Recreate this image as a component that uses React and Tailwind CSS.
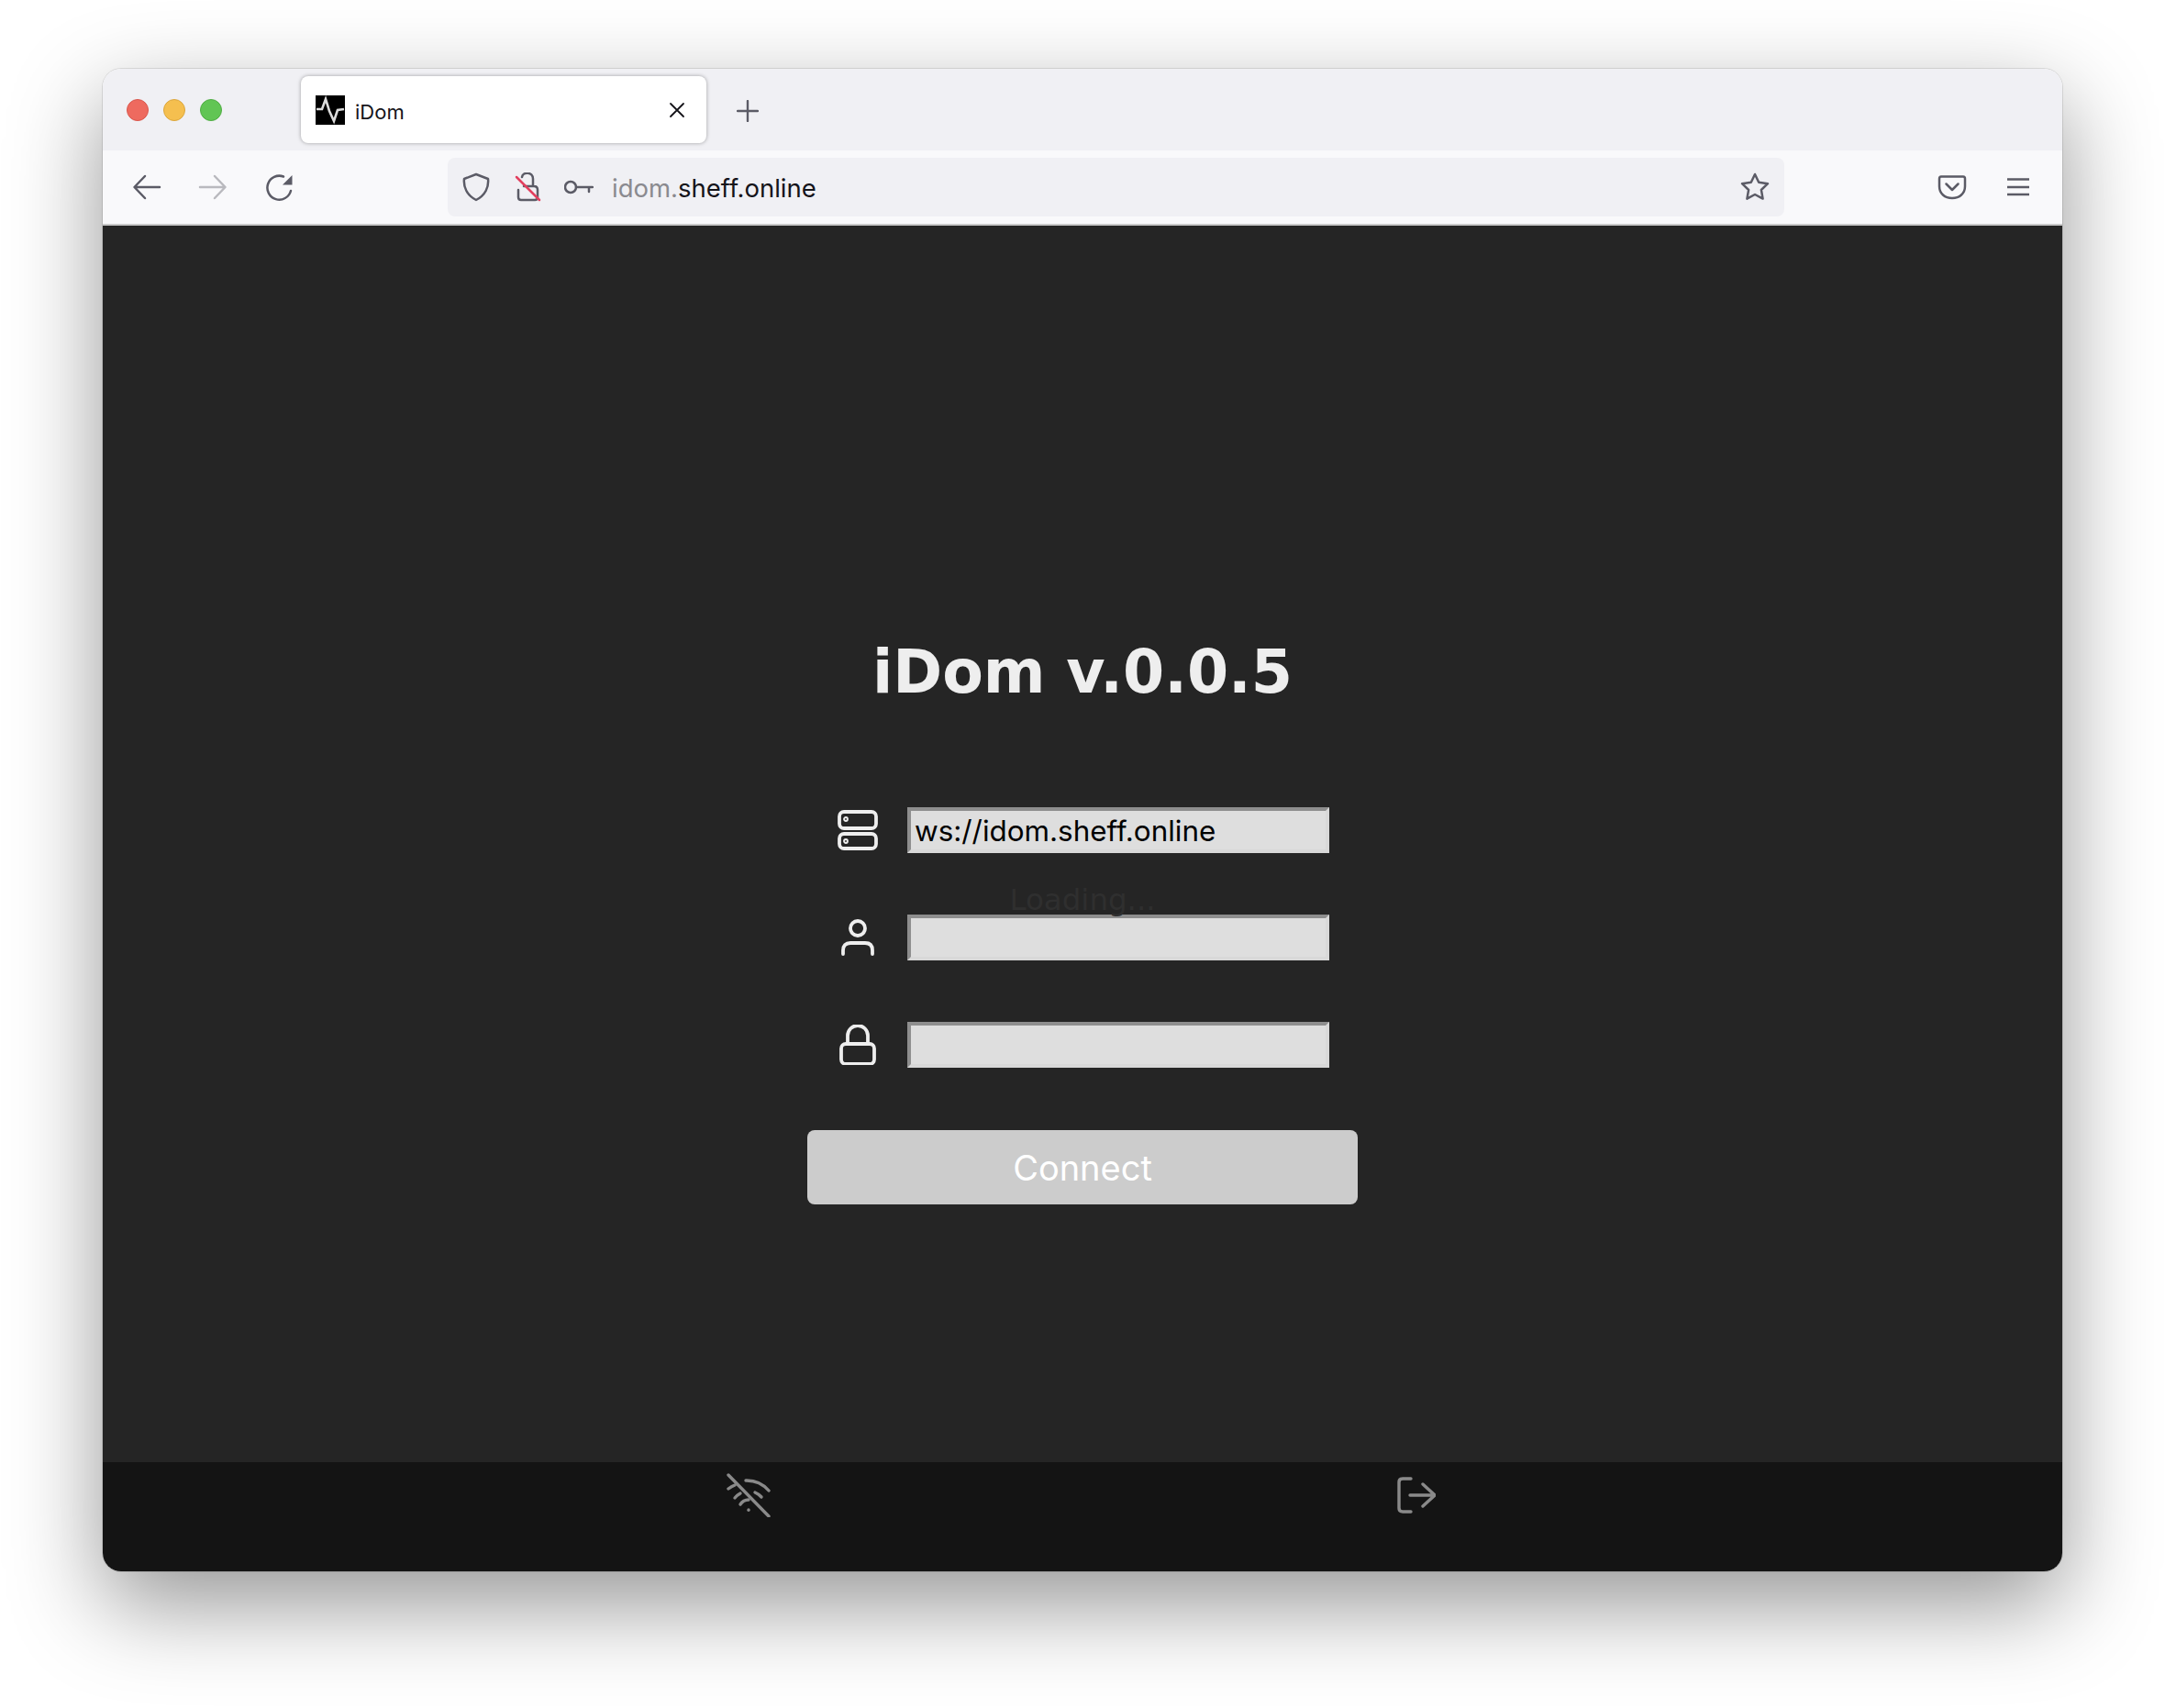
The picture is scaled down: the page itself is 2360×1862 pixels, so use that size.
import React from "react";

const G = "#5b5b66";

function Ico({ w = 32, h = 32, sw = 2.5, c = G, children, className = "" }) {
  return (
    <svg width={w} height={h} viewBox={`0 0 ${w} ${h}`} fill="none" stroke={c} strokeWidth={sw} strokeLinecap="round" strokeLinejoin="round" className={`shrink-0 ${className}`}>
      {children}
    </svg>
  );
}

const Field = ({ icon, value }) => (
  <div className="flex items-center h-[50px]">
    <div className="w-[109px] flex justify-center">{icon}</div>
    <input
      readOnly
      value={value}
      className="w-[460px] h-[50px] bg-[#dedede] border-4 border-t-[#8e8e8e] border-l-[#8e8e8e] border-r-[#d8d8d8] border-b-[#d8d8d8] pl-[4px] pt-[2px] text-[31.4px] leading-[42px] text-black outline-none font-['Inter',sans-serif]"
    />
  </div>
);

export default function App() {
  return (
    <div className="w-[2360px] h-[1862px] bg-white pl-[112px] pt-[75px] overflow-hidden font-['Inter',sans-serif]">
      <div className="w-[2136px] h-[1638px] flex flex-col rounded-[20px] overflow-hidden shadow-[0_0_0_1px_rgba(0,0,0,0.1),0_36px_100px_0_rgba(0,0,0,0.42)]">
        {/* tab strip */}
        <div className="h-[89px] bg-[#f0f0f4] flex items-center pl-[26px]">
          <div className="flex gap-4">
            <span className="w-6 h-6 rounded-full bg-[#ee6a5f] border border-[#d9564c]" />
            <span className="w-6 h-6 rounded-full bg-[#f5bf4f] border border-[#dba63c]" />
            <span className="w-6 h-6 rounded-full bg-[#61c554] border border-[#50ad44]" />
          </div>
          <div className="ml-[86px] w-[442px] h-[73px] bg-white rounded-[8px] shadow-[0_0_4px_rgba(0,0,0,0.35)] flex items-center pl-4 pr-[22px]">
            <svg width="32" height="32" viewBox="0 0 32 32" className="shrink-0 bg-black">
              <polyline points="1,15 7,15 11,4 15,17 20,28 24,16 31,15" fill="none" stroke="#dcdcdc" strokeWidth="2.6" />
            </svg>
            <span className="ml-[11px] text-[22px] leading-[32px] text-[#15141a] mt-[4px]">iDom</span>
            <Ico w={20} h={20} sw={1.8} c="#15141a" className="ml-auto">
              <path d="M3 3 L17 17 M17 3 L3 17" />
            </Ico>
          </div>
          <Ico w={24} h={24} sw={2.4} className="ml-[33px] mt-[3px]">
            <path d="M12 1 V23 M1 12 H23" />
          </Ico>
        </div>

        {/* toolbar */}
        <div className="h-[82px] bg-[#f9f9fb] border-b-2 border-[#c9c9c9] flex items-center pl-[32px]">
          <Ico>
            <path d="M30 16 H3 M14 4 L2.5 16 L14 28" />
          </Ico>
          <Ico c="#b9b9be" className="ml-10">
            <path d="M2 16 H29 M18 4 L29.5 16 L18 28" />
          </Ico>
          <Ico className="ml-10">
            <path d="M29 20 A13 13 0 1 1 21 4.5" />
            <path d="M30.5 3 V13.5 H20 Z" fill={G} stroke="none" />
          </Ico>
          <div className="ml-[168px] w-[1457px] h-[64px] rounded-[8px] bg-[#f0f0f4] flex items-center pl-[15px] pr-4">
            <Ico>
              <path d="M16 2 L29 7 C30 16 26 25 16 30 C6 25 2 16 3 7 Z" />
            </Ico>
            <svg width="32" height="32" viewBox="0 0 32 32" fill="none" strokeLinecap="round" strokeLinejoin="round" className="ml-6 shrink-0">
              <path d="M10 5 C11 -1 22 -1 22 7 V15 M6 19 V27 Q6 30 9 30 H24 Q27 30 27 27 V19 Q27 15 23 15 H12" stroke={G} strokeWidth="2.5" />
              <path d="M4 5 L29 30" stroke="#e2405f" strokeWidth="2.5" />
            </svg>
            <Ico className="ml-6">
              <circle cx="7" cy="16" r="6" />
              <path d="M13 16 H31 M27 16 V21" />
            </Ico>
            <span className="ml-[20px] mt-[2px] text-[27.5px] leading-[40px] whitespace-nowrap">
              <span className="text-[#8a8a8f]">idom.</span>
              <span className="text-[#15141a]">sheff.online</span>
            </span>
            <Ico className="ml-auto">
              <path d="M16 2 L20.2 10.8 L30 12.2 L22.9 19 L24.6 28.6 L16 24 L7.4 28.6 L9.1 19 L2 12.2 L11.8 10.8 Z" />
            </Ico>
          </div>
          <Ico className="ml-[167px]">
            <path d="M4 4.5 H28 Q30 4.5 30 7 V15 C30 23 24 28 16 28 C8 28 2 23 2 15 V7 Q2 4.5 4 4.5 Z" />
            <path d="M9.5 12.5 L16 19 L22.5 12.5" />
          </Ico>
          <Ico className="ml-10">
            <path d="M4 7.5 H28 M4 16 H28 M4 24 H28" strokeLinecap="butt" />
          </Ico>
        </div>

        {/* page */}
        <div className="flex-1 bg-[#252525] flex flex-col items-center">
          <h1 className="mt-[437px] text-[65px] leading-[100px] font-bold text-[#eeeeee] font-['DejaVu_Sans',sans-serif]">iDom v.0.0.5</h1>
          <div className="relative w-[600px] mt-[97px] flex flex-col gap-[67px]">
            <span className="absolute left-0 right-0 top-[82px] text-center text-[32.5px] leading-[38px] text-[#2f2f2f] font-['DejaVu_Sans',sans-serif]">Loading...</span>
            <Field
              value="ws://idom.sheff.online"
              icon={
                <Ico w={44} h={44} sw={3.8} c="#eeeeee">
                  <rect x="2" y="2" width="40" height="18" rx="5" />
                  <rect x="2" y="26" width="40" height="16" rx="5" />
                  <circle cx="9" cy="10" r="1" />
                  <circle cx="9" cy="34" r="1" />
                </Ico>
              }
            />
            <Field
              value=""
              icon={
                <Ico w={36} h={40} sw={3.8} c="#eeeeee">
                  <circle cx="18" cy="10" r="8" />
                  <path d="M2 38 V34 Q2 26 10 26 H26 Q34 26 34 34 V38" />
                </Ico>
              }
            />
            <Field
              value=""
              icon={
                <Ico w={40} h={44} sw={3.8} c="#eeeeee">
                  <rect x="2" y="21" width="36" height="22" rx="5" />
                  <path d="M9 21 V12 A11 11 0 0 1 31 12 V21" />
                </Ico>
              }
            />
            <button className="w-[600px] h-[81px] mt-px pt-[2px] rounded-[8px] bg-[#cccccc] text-white text-[38px]">Connect</button>
          </div>
        </div>

        {/* footer */}
        <div className="h-[119px] bg-[#141414] flex justify-evenly items-start">
          <Ico w={48} h={48} sw={3.4} c="#8a8a8a" className="mt-3 -ml-[3px]">
            <path d="M2 2 L46 47" />
            <path d="M21 8 A32 32 0 0 1 46 19" />
            <path d="M2 17 A32 32 0 0 1 9 13" />
            <path d="M31 21 A20 20 0 0 1 38 26" />
            <path d="M9 27 A20 20 0 0 1 15 22" />
            <path d="M15 34 A11 11 0 0 1 24 29" />
            <path d="M24 40 V40.2" />
          </Ico>
          <Ico w={42} h={40} sw={3.4} c="#8a8a8a" className="mt-4">
            <path d="M15 2 H6 Q2 2 2 6 V34 Q2 38 6 38 H15" />
            <path d="M14 20 H40 M28 8 L41 20 L28 32" />
          </Ico>
        </div>
      </div>
    </div>
  );
}
